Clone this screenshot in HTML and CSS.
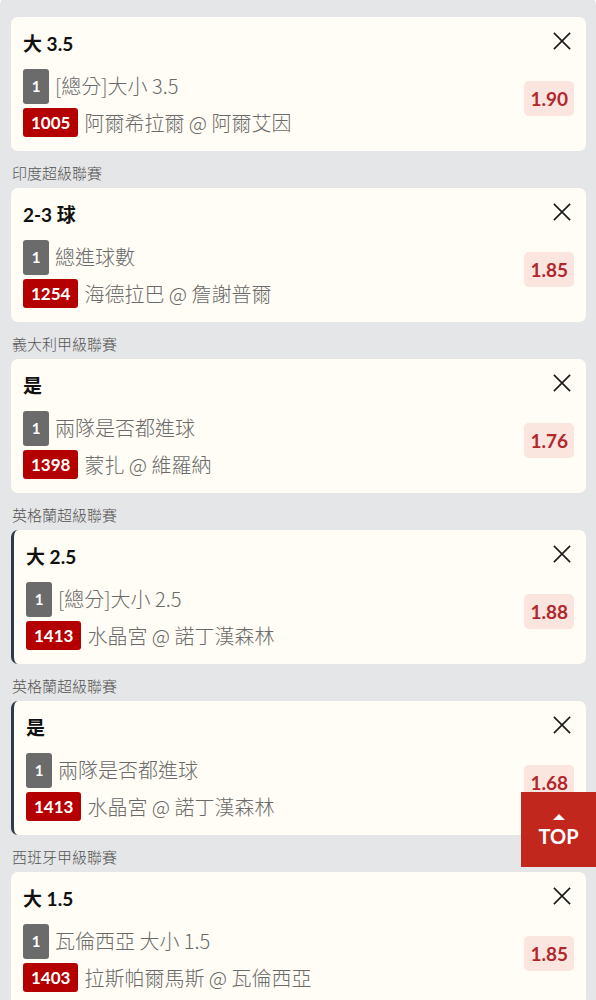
FILE: index.html
```html
<!DOCTYPE html>
<html lang="zh-Hant">
<head>
<meta charset="utf-8">
<link rel="stylesheet" href="styles.css">
</head>
<body>
<div class="panel">
  <div class="card">
    <div class="main">
      <div class="title">大 3.5</div>
      <div class="row"><span class="num">1</span><span class="txt">[總分]大小 3.5</span></div>
      <div class="row row2"><span class="code">1005</span><span class="txt">阿爾希拉爾 @ 阿爾艾因</span></div>
    </div>
    <div class="side">
      <svg class="close" viewBox="0 0 20 20"><path d="M1 1L19 19M19 1L1 19"/></svg>
      <div class="odds">1.90</div>
    </div>
  </div>

  <div class="league">印度超級聯賽</div>
  <div class="card">
    <div class="main">
      <div class="title">2-3 球</div>
      <div class="row"><span class="num">1</span><span class="txt">總進球數</span></div>
      <div class="row row2"><span class="code">1254</span><span class="txt">海德拉巴 @ 詹謝普爾</span></div>
    </div>
    <div class="side">
      <svg class="close" viewBox="0 0 20 20"><path d="M1 1L19 19M19 1L1 19"/></svg>
      <div class="odds">1.85</div>
    </div>
  </div>

  <div class="league">義大利甲級聯賽</div>
  <div class="card">
    <div class="main">
      <div class="title">是</div>
      <div class="row"><span class="num">1</span><span class="txt">兩隊是否都進球</span></div>
      <div class="row row2"><span class="code">1398</span><span class="txt">蒙扎 @ 維羅納</span></div>
    </div>
    <div class="side">
      <svg class="close" viewBox="0 0 20 20"><path d="M1 1L19 19M19 1L1 19"/></svg>
      <div class="odds">1.76</div>
    </div>
  </div>

  <div class="league">英格蘭超級聯賽</div>
  <div class="card marked">
    <div class="main">
      <div class="title">大 2.5</div>
      <div class="row"><span class="num">1</span><span class="txt">[總分]大小 2.5</span></div>
      <div class="row row2"><span class="code">1413</span><span class="txt">水晶宮 @ 諾丁漢森林</span></div>
    </div>
    <div class="side">
      <svg class="close" viewBox="0 0 20 20"><path d="M1 1L19 19M19 1L1 19"/></svg>
      <div class="odds">1.88</div>
    </div>
  </div>

  <div class="league">英格蘭超級聯賽</div>
  <div class="card marked">
    <div class="main">
      <div class="title">是</div>
      <div class="row"><span class="num">1</span><span class="txt">兩隊是否都進球</span></div>
      <div class="row row2"><span class="code">1413</span><span class="txt">水晶宮 @ 諾丁漢森林</span></div>
    </div>
    <div class="side">
      <svg class="close" viewBox="0 0 20 20"><path d="M1 1L19 19M19 1L1 19"/></svg>
      <div class="odds">1.68</div>
    </div>
  </div>

  <div class="league">西班牙甲級聯賽</div>
  <div class="card">
    <div class="main">
      <div class="title">大 1.5</div>
      <div class="row"><span class="num">1</span><span class="txt">瓦倫西亞 大小 1.5</span></div>
      <div class="row row2"><span class="code">1403</span><span class="txt">拉斯帕爾馬斯 @ 瓦倫西亞</span></div>
    </div>
    <div class="side">
      <svg class="close" viewBox="0 0 20 20"><path d="M1 1L19 19M19 1L1 19"/></svg>
      <div class="odds">1.85</div>
    </div>
  </div>
</div>

<a class="top-btn" href="#"><span class="arrow"></span><span class="top-text">TOP</span></a>
</body>
</html>
```

FILE: styles.css
```css
html, body {
  margin: 0;
  padding: 0;
  background: #ffffff;
}
body {
  font-family: Lato, "Noto Sans CJK TC", sans-serif;
  overflow: hidden;
}
.panel {
  background: #e5e6e8;
  margin-top: -5px;
  padding: 22px 10px 40px 11px;
  border-radius: 10px;
  min-height: 1100px;
}
.card {
  background: #fffdf5;
  border-radius: 7px;
  display: flex;
  height: 134px;
  box-sizing: border-box;
  padding: 14px 12px 14px 12px;
}
.card.marked {
  border-left: 3px solid #2e3b4a;
}
.main {
  flex: 1;
  min-width: 0;
}
.title {
  font-size: 19px;
  font-weight: 700;
  height: 26px;
  line-height: 26px;
  color: #111;
  margin-bottom: 11px;
}
.row {
  display: flex;
  align-items: center;
  gap: 6px;
  height: 36px;
}
.row2 {
  margin-top: 4px;
  height: 29px;
}
.num {
  width: 26px;
  height: 35px;
  background: #6b6b6b;
  color: #fff;
  border-radius: 3px;
  font-size: 15px;
  font-weight: 700;
  display: flex;
  align-items: center;
  justify-content: center;
}
.code {
  height: 29px;
  padding: 0 8px;
  background: #b40000;
  color: #fff;
  border-radius: 3px;
  font-size: 17px;
  font-weight: 700;
  display: flex;
  align-items: center;
}
.txt {
  font-family: "Noto Sans CJK TC", sans-serif;
  font-size: 20px;
  font-weight: 300;
  line-height: 24px;
  color: #6a6a6a;
  white-space: nowrap;
}
.side {
  display: flex;
  flex-direction: column;
  align-items: flex-end;
}
.close {
  width: 18px;
  height: 18px;
  margin-top: 1px;
  margin-right: 3px;
  stroke: #1a1a1a;
  stroke-width: 1.8;
  fill: none;
}
.odds {
  margin-top: 31px;
  height: 35px;
  padding: 0 6px;
  background: #fbe5df;
  border-radius: 5px;
  color: #b0282d;
  font-size: 19px;
  font-weight: 700;
  display: flex;
  align-items: center;
}
.league {
  font-family: "Noto Sans CJK TC", sans-serif;
  font-size: 15px;
  font-weight: 300;
  height: 20px;
  line-height: 20px;
  color: #555;
  margin: 12px 0 5px 1px;
}
.top-btn {
  position: fixed;
  right: 0;
  top: 792px;
  width: 75px;
  height: 75px;
  background: #c1271d;
  color: #fff;
  text-decoration: none;
  display: flex;
  flex-direction: column;
  align-items: center;
  padding-top: 22px;
  box-sizing: border-box;
}
.arrow {
  width: 0;
  height: 0;
  border-left: 6px solid transparent;
  border-right: 6px solid transparent;
  border-bottom: 6px solid #fff;
}
.top-text {
  font-size: 20px;
  font-weight: 700;
  line-height: 24px;
  margin-top: 4px;
}
```
